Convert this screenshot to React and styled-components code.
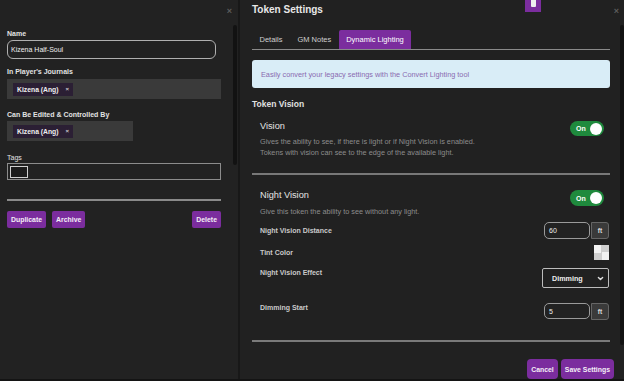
import React from "react"
import styled, { createGlobalStyle } from "styled-components"

const GlobalStyle = createGlobalStyle`
  html, body {
    margin: 0;
    padding: 0;
    background: #141414;
  }
  body {
    font-family: "Liberation Sans", Arial, sans-serif;
    color: #ddd;
  }
`

const purple = "#7b2d9e"

const Screen = styled.div`
  display: flex;
  width: 624px;
  height: 379px;
  overflow: hidden;
  background: #141414;
`

const LeftPanel = styled.div`
  width: 238px;
  display: flex;
  flex-direction: column;
  background: #222;
`

const Seam = styled.div`
  width: 2px;
  background: #181818;
`

const RightPanel = styled.div`
  position: relative;
  flex: 1;
  display: flex;
  flex-direction: column;
  background: #212121;
`

const PanelHead = styled.div`
  height: 25px;
  display: flex;
  align-items: flex-start;
  justify-content: space-between;
  padding: 0 ${props => props.$right}px 0 ${props => props.$left}px;
`

const Title = styled.h1`
  margin: 0;
  font-size: 10px;
  line-height: 20px;
  font-weight: bold;
  color: #e8e8e8;
`

const Close = styled.span`
  margin-left: auto;
  margin-top: 6px;
  font-size: 9px;
  line-height: 10px;
  font-weight: bold;
  color: #5c5c5c;
`

const PinnedTab = styled.div`
  position: absolute;
  left: 285px;
  top: 0;
  width: 16px;
  height: 12px;
  background: ${purple};

  &::after {
    content: "";
    position: absolute;
    left: 6px;
    top: 0;
    width: 5px;
    height: 7px;
    background: #eee;
    border-radius: 0 0 1px 1px;
  }
`

const PanelBody = styled.div`
  flex: 1;
  display: flex;
`

const Form = styled.div`
  width: ${props => props.$width}px;
  padding: ${props => props.$top}px 0 0 ${props => props.$left}px;
  display: flex;
  flex-direction: column;
`

const ScrollTrack = styled.div`
  margin-left: ${props => props.$gap}px;
  width: 4px;
`

const Thumb = styled.div`
  height: ${props => props.$h}px;
  background: #121212;
  border-radius: 2px;
`

const Label = styled.div`
  margin-top: ${props => props.$mt || 0}px;
  margin-bottom: ${props => props.$mb || 0}px;
  font-size: 7px;
  line-height: 10px;
  font-weight: ${props => (props.$light ? "normal" : "bold")};
  color: #e2e2e2;
`

const TextInput = styled.div`
  box-sizing: border-box;
  width: ${props => props.$w}px;
  height: ${props => props.$h}px;
  border: 1px solid ${props => props.$border};
  border-radius: ${props => props.$radius}px;
  background: #222;
  display: flex;
  align-items: center;
  padding: 0 ${props => props.$pad || 2}px;
  font-size: 7px;
  color: #eee;
`

const ChipBox = styled.div`
  width: ${props => props.$w}px;
  height: 20px;
  background: #3a3a3a;
  display: flex;
  align-items: center;
  padding-left: 6px;
  box-sizing: border-box;
`

const Chip = styled.div`
  height: 13px;
  display: flex;
  align-items: center;
  gap: 7px;
  padding: 0 4px;
  background: #2b1f34;
  font-size: 6.8px;
  font-weight: bold;
  color: #eee;

  span {
    font-size: 6px;
    color: #ccc;
  }
`

const EmptyTag = styled.div`
  width: 18px;
  height: 12px;
  box-sizing: border-box;
  border: 1px solid #cfcfcf;
  background: #1c1c1c;
`

const Rule = styled.div`
  margin-top: ${props => props.$mt}px;
  height: 2px;
  background: ${props => props.$color || "#8a8a8a"};
`

const ButtonRow = styled.div`
  margin-top: ${props => props.$mt || 0}px;
  display: flex;
  justify-content: ${props => props.$end ? "flex-end" : "flex-start"};
  gap: ${props => props.$gap || 6}px;
`

const Button = styled.button`
  height: ${props => props.$h || 17}px;
  padding: 0 ${props => props.$pad || 4}px;
  border: none;
  border-radius: ${props => props.$h > 18 ? 4 : 2}px;
  background: ${purple};
  color: #f4eef7;
  font-family: inherit;
  font-size: 6.9px;
  font-weight: bold;
  ${props => props.$push && "margin-left: auto;"}
`

const Tabs = styled.div`
  margin-top: 5px;
  display: flex;
  border-bottom: 1.5px solid #8a8a8a;
`

const Tab = styled.div`
  height: 19px;
  padding: 0 7.5px;
  display: flex;
  align-items: center;
  font-size: 7.5px;
  color: ${props => (props.$active ? "#fff" : "#cfcfcf")};
  background: ${props => (props.$active ? purple : "transparent")};
  border-radius: 2px 2px 0 0;
`

const Notice = styled.div`
  margin-top: 10px;
  height: 28px;
  display: flex;
  align-items: center;
  padding-left: 9px;
  background: #d9edf7;
  border-radius: 3px;
  font-size: 7.3px;
  color: #8a6bb0;
`

const SectionTitle = styled.div`
  margin-top: 10px;
  font-size: 8.5px;
  line-height: 12px;
  font-weight: bold;
  color: #e0e0e0;
`

const Block = styled.div`
  padding: 0 6px 0 8px;
`

const Row = styled.div`
  margin-top: ${props => props.$mt || 0}px;
  display: flex;
  justify-content: space-between;
  align-items: ${props => (props.$top ? "flex-start" : "center")};
`

const Heading = styled.div`
  font-size: 9.2px;
  line-height: 11px;
  color: #e4e4e4;
`

const Desc = styled.p`
  margin: 0;
  font-size: 7.3px;
  line-height: 11px;
  color: #8c8c8c;
`

const FieldLabel = styled.div`
  font-size: 7px;
  line-height: 10px;
  font-weight: bold;
  color: #c9c9c9;
`

const Toggle = styled.div`
  width: 34px;
  height: ${props => props.$h}px;
  box-sizing: border-box;
  border-radius: 8px;
  background: #1f8a3d;
  display: flex;
  align-items: center;
  justify-content: space-between;
  padding: 0 2px 0 6px;
  font-size: 7px;
  font-weight: bold;
  color: #fff;

  &::after {
    content: "";
    width: 12px;
    height: 12px;
    border-radius: 50%;
    background: #fff;
  }
`

const UnitInput = styled.div`
  display: flex;
  height: 17px;
  margin-right: 1px;
`

const Unit = styled.div`
  width: 18px;
  margin-left: 1px;
  box-sizing: border-box;
  display: flex;
  align-items: center;
  justify-content: center;
  background: #3a3a3a;
  border: 1px solid #666;
  border-radius: 0 3px 3px 0;
  font-size: 6.5px;
  font-weight: bold;
  color: #ddd;
`

const Swatch = styled.div`
  width: 15px;
  height: 15px;
  margin-right: 1px;
  background: repeating-conic-gradient(#cfcfcf 0% 25%, #f2f2f2 0% 50%) 0 0 / 15px 15px;
`

const Select = styled.div`
  width: 67px;
  height: 20px;
  box-sizing: border-box;
  border: 1px solid #bdbdbd;
  border-radius: 2px;
  display: flex;
  align-items: center;
  justify-content: space-between;
  padding: 0 4px 0 9px;
  margin-right: 1px;
  font-size: 7.2px;
  font-weight: bold;
  color: #eee;

  svg {
    width: 7px;
    height: 7px;
  }
`

const Footer = styled.div`
  padding: 11px 10px 0 0;
`

const Field = ({ label, mt, mb, light, children }) => (
  <>
    <Label $mt={mt} $mb={mb} $light={light}>{label}</Label>
    {children}
  </>
)

const Chevron = () => (
  <svg viewBox="0 0 10 10" fill="none" stroke="#ddd" strokeWidth="2" strokeLinecap="round" strokeLinejoin="round">
    <path d="M2 3.5l3 3 3-3" />
  </svg>
)

const App = () => {
  return (
    <>
      <GlobalStyle />
      <Screen>
        <LeftPanel>
          <PanelHead $left={7} $right={6}>
            <Close>×</Close>
          </PanelHead>
          <PanelBody>
            <Form $width={214} $left={7} $top={4}>
              <Field label="Name" mb={1}>
                <TextInput $w={209} $h={19} $radius={6} $border="#b0b0b0" $pad={3}>Kizena Half-Soul</TextInput>
              </Field>
              <Field label="In Player's Journals" mt={8} mb={2}>
                <ChipBox $w={214}>
                  <Chip>Kizena (Ang)<span>×</span></Chip>
                </ChipBox>
              </Field>
              <Field label="Can Be Edited & Controlled By" mt={11} mb={1}>
                <ChipBox $w={126}>
                  <Chip>Kizena (Ang)<span>×</span></Chip>
                </ChipBox>
              </Field>
              <Field label="Tags" mt={12} light>
                <TextInput $w={214} $h={17} $radius={0} $border="#8c8c8c">
                  <EmptyTag />
                </TextInput>
              </Field>
              <Rule $mt={19} />
              <ButtonRow $mt={10}>
                <Button>Duplicate</Button>
                <Button>Archive</Button>
                <Button $push>Delete</Button>
              </ButtonRow>
            </Form>
            <ScrollTrack $gap={12}>
              <Thumb $h={140} />
            </ScrollTrack>
          </PanelBody>
        </LeftPanel>
        <Seam />
        <RightPanel>
          <PinnedTab />
          <PanelHead $left={12} $right={5}>
            <Title>Token Settings</Title>
            <Close>×</Close>
          </PanelHead>
          <PanelBody>
            <Form $width={358} $left={12} $top={0}>
              <Tabs>
                <Tab>Details</Tab>
                <Tab>GM Notes</Tab>
                <Tab $active>Dynamic Lighting</Tab>
              </Tabs>
              <Notice>Easily convert your legacy settings with the Convert Lighting tool</Notice>
              <SectionTitle>Token Vision</SectionTitle>
              <Block>
                <Row $mt={11} $top>
                  <Heading>Vision</Heading>
                  <Toggle $h={15}>On</Toggle>
                </Row>
                <Desc>
                  Gives the ability to see, if there is light or if Night Vision is enabled.
                  <br />
                  Tokens with vision can see to the edge of the available light.
                </Desc>
              </Block>
              <Rule $mt={15} $color="#787878" />
              <Block>
                <Row $mt={15} $top>
                  <Heading>Night Vision</Heading>
                  <Toggle $h={16}>On</Toggle>
                </Row>
                <Desc>Give this token the ability to see without any light.</Desc>
              </Block>
              <Row $mt={5}>
                <Block><FieldLabel>Night Vision Distance</FieldLabel></Block>
                <UnitInput>
                  <TextInput $w={46} $h={17} $radius={5} $border="#9a9a9a" $pad={4}>60</TextInput>
                  <Unit>ft</Unit>
                </UnitInput>
              </Row>
              <Row $mt={6}>
                <Block><FieldLabel>Tint Color</FieldLabel></Block>
                <Swatch />
              </Row>
              <Row $mt={8} $top>
                <Block><FieldLabel>Night Vision Effect</FieldLabel></Block>
                <Select>Dimming<Chevron /></Select>
              </Row>
              <Row $mt={15} $top>
                <Block><FieldLabel>Dimming Start</FieldLabel></Block>
                <UnitInput>
                  <TextInput $w={46} $h={16} $radius={5} $border="#9a9a9a" $pad={4}>5</TextInput>
                  <Unit>ft</Unit>
                </UnitInput>
              </Row>
              <Rule $mt={20} $color="#7a7a7a" />
            </Form>
            <ScrollTrack $gap={10}>
              <Thumb $h={320} />
            </ScrollTrack>
          </PanelBody>
          <Footer>
            <ButtonRow $end $gap={3}>
              <Button $h={20} $pad={4}>Cancel</Button>
              <Button $h={20} $pad={4}>Save Settings</Button>
            </ButtonRow>
          </Footer>
        </RightPanel>
      </Screen>
    </>
  )
}

export default App
